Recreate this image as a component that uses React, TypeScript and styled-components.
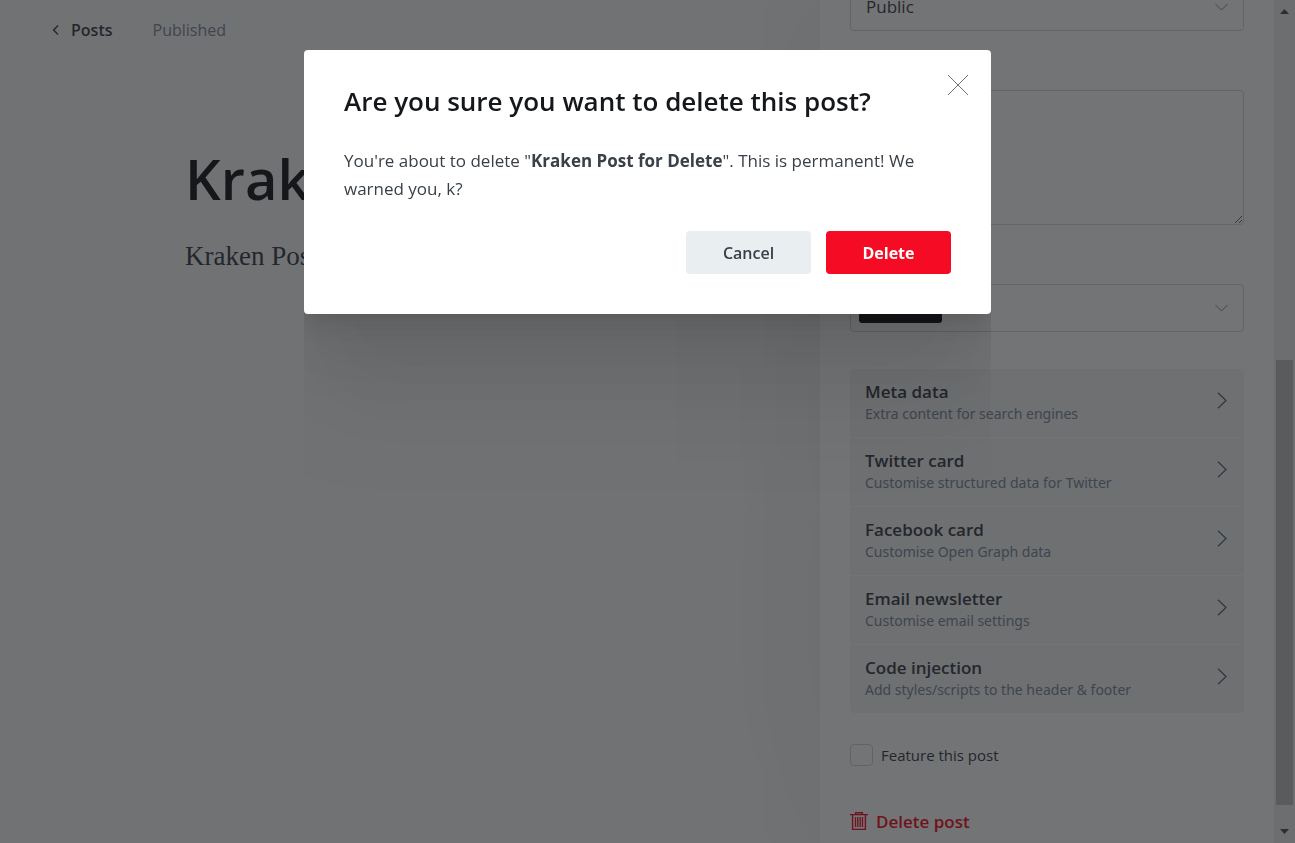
import React from "react";
import styled, { createGlobalStyle } from "styled-components";

const sans = `"Open Sans", "Noto Sans", sans-serif`;
const serif = `Georgia, "Liberation Serif", serif`;

const GlobalStyle = createGlobalStyle`
  *, *::before, *::after { box-sizing: border-box; }
  body {
    margin: 0;
    font-family: ${sans};
    font-size: 16px;
    line-height: 24px;
    color: #394047;
    background: #fff;
    overflow: hidden;
  }
  button, input, select, textarea { font: inherit; color: inherit; }
  h1, h2, p { margin: 0; }
`;

const Screen = styled.div`
  display: grid;
  grid-template-columns: minmax(0, 1fr) 475px;
  height: 100vh;
  overflow: hidden;
`;

const Editor = styled.main`
  min-width: 0;
  overflow: hidden;
  background: #fbfbfb;
`;

const EditorHeader = styled.header`
  display: flex;
  align-items: center;
  gap: 40px;
  height: 60px;
  padding: 0 52px;
`;

const BackLink = styled.a`
  display: flex;
  align-items: center;
  gap: 11px;
  color: #394047;
  font-weight: 600;
  text-decoration: none;
`;

const Status = styled.span`
  color: #7c8b9a;
`;

const Article = styled.article`
  padding: 78px 0 0 185px;
  white-space: nowrap;
`;

const PostTitle = styled.h1`
  font-size: 56px;
  line-height: 80px;
  font-weight: 600;
  color: #15171a;
`;

const PostBody = styled.p`
  margin-top: 22px;
  font-family: ${serif};
  font-size: 27px;
  line-height: 32px;
  color: #394047;
`;

const Sidebar = styled.aside`
  display: grid;
  grid-template-columns: minmax(0, 1fr) 21px;
  height: 100vh;
  background: #fff;
  box-shadow: 0 0 180px rgba(0, 0, 0, 0.08);
  z-index: 1;
`;

const Settings = styled.form`
  display: flex;
  flex-direction: column;
  justify-content: flex-end;
  height: 100vh;
  padding: 0 30px 8px;
  overflow: hidden;
`;

const SelectBox = styled.div`
  display: grid;
  flex: none;
  align-items: center;
  height: 48px;
  border: 1px solid #d5d9dd;
  border-radius: 4px;

  > * {
    grid-area: 1 / 1;
  }

  > svg {
    justify-self: end;
    margin-right: 15px;
    pointer-events: none;
  }
`;

const Select = styled.select`
  appearance: none;
  width: 100%;
  height: 46px;
  padding: 0 15px;
  border: 0;
  background: transparent;
  font-size: 17px;
`;

const Excerpt = styled.textarea`
  flex: none;
  height: 135px;
  margin: 59px 0;
  padding: 10px 15px;
  border: 1px solid #d5d9dd;
  border-radius: 4px;
  background: #fff;
  resize: vertical;
`;

const AuthorTag = styled.button`
  justify-self: start;
  width: 83px;
  height: 30px;
  margin-left: 8px;
  padding: 0;
  border: 0;
  border-radius: 3px;
  background: #15171a;
`;

const OptionList = styled.div`
  display: flex;
  flex: none;
  flex-direction: column;
  gap: 1px;
  margin: 37px 0 30px;
  border-radius: 4px;
  overflow: hidden;
`;

const Option = styled.button`
  display: flex;
  align-items: center;
  justify-content: space-between;
  height: 68px;
  padding: 0 17px 6px 15px;
  border: 0;
  background: #f3f4f5;
  text-align: left;
`;

const OptionText = styled.span`
  display: flex;
  flex-direction: column;
  padding-top: 4px;
`;

const OptionTitle = styled.span`
  line-height: 23px;
  font-size: 17px;
  font-weight: 600;
`;

const OptionHint = styled.span`
  font-family: "Noto Sans", sans-serif;
  font-size: 14px;
  line-height: 21px;
  color: #7c8b9a;
`;

const FeatureLabel = styled.label`
  display: flex;
  flex: none;
  align-items: center;
  gap: 8px;
  height: 24px;
  font-size: 15px;
`;

const FeatureBox = styled.input`
  appearance: none;
  width: 23px;
  height: 22px;
  margin: 0;
  border: 1px solid #ced4d9;
  border-radius: 4px;
`;

const DeleteLink = styled.button`
  display: flex;
  flex: none;
  align-items: center;
  align-self: flex-start;
  gap: 8px;
  height: 26px;
  margin-top: 42px;
  padding: 0;
  border: 0;
  background: none;
  color: #f50b23;
  font-size: 17px;
  font-weight: 600;
`;

const ScrollTrack = styled.div`
  display: flex;
  flex-direction: column;
  align-items: center;
  justify-content: space-between;
  height: 100vh;
  padding: 9px 0;
  background: #f1f1f1;
`;

const ScrollThumb = styled.div`
  flex: 0 0 54%;
  width: 17px;
  margin: auto 0 24px;
  background: #c1c1c1;
`;

const Overlay = styled.div`
  position: fixed;
  inset: 0;
  z-index: 10;
  display: flex;
  align-items: flex-start;
  justify-content: center;
  padding-top: 50px;
  background: rgba(21, 23, 26, 0.6);
`;

const Dialog = styled.section`
  position: relative;
  width: 100%;
  max-width: 687px;
  padding: 32px 40px 40px;
  border-radius: 4px;
  background: #fff;
  box-shadow:
    0 3px 6px rgba(0, 0, 0, 0.03),
    0 12px 20px rgba(0, 0, 0, 0.07),
    0 40px 60px rgba(0, 0, 0, 0.07),
    0 100px 100px rgba(0, 0, 0, 0.07);
  clip-path: inset(0 0 -300px 0);
`;

const DialogTitle = styled.h2`
  font-size: 26px;
  line-height: 38px;
  font-weight: 600;
  color: #15171a;
`;

const DialogText = styled.p`
  margin-top: 27px;
  font-size: 17px;
  line-height: 28px;
`;

const CloseButton = styled.button`
  position: absolute;
  top: 24px;
  right: 22px;
  display: flex;
  padding: 0;
  border: 0;
  background: none;
`;

const DialogActions = styled.div`
  display: flex;
  justify-content: flex-end;
  gap: 15px;
  margin-top: 28px;
`;

const ActionButton = styled.button<{ $danger?: boolean }>`
  width: 125px;
  height: 43px;
  padding: 0;
  border: 0;
  border-radius: 4px;
  background: ${(p) => (p.$danger ? "#f50b23" : "#e9eef1")};
  color: ${(p) => (p.$danger ? "#fff" : "#394047")};
  font-weight: ${(p) => (p.$danger ? 700 : 600)};
`;

const ChevronDown = () => (
  <svg width="13" height="8" viewBox="0 0 13 8" fill="none" stroke="#7c8b9a" aria-hidden="true">
    <path d="M.5 1l6 6 6-6" />
  </svg>
);

const ChevronRight = () => (
  <svg width="10" height="17" viewBox="0 0 10 17" fill="none" stroke="#5b6b7b" strokeWidth="1.3" aria-hidden="true">
    <path d="M1 .7l8 7.8-8 7.8" />
  </svg>
);

const ChevronLeft = () => (
  <svg width="8" height="10" viewBox="0 0 8 10" fill="none" stroke="#394047" strokeWidth="1.4" aria-hidden="true">
    <path d="M6 .6L1.6 5 6 9.4" />
  </svg>
);

const Trash = () => (
  <svg width="18" height="20" viewBox="0 0 18 20" fill="none" stroke="#f50b23" aria-hidden="true">
    <path strokeWidth="1.4" d="M0 2.6h18M5.6 2.4V.7h6.8v1.7M2.6 2.8v14.6h12.8V2.8" />
    <path strokeWidth="1.3" d="M5.5 5v10M7.8 5v10M10.2 5v10M12.5 5v10" />
  </svg>
);

const ScrollArrow = ({ down = false }: { down?: boolean }) => (
  <svg width="9" height="5" viewBox="0 0 9 5" fill="#505050" aria-hidden="true">
    <path d={down ? "M0 0h9L4.5 5z" : "M0 5h9L4.5 0z"} />
  </svg>
);

const options = [
  ["Meta data", "Extra content for search engines"],
  ["Twitter card", "Customise structured data for Twitter"],
  ["Facebook card", "Customise Open Graph data"],
  ["Email newsletter", "Customise email settings"],
  ["Code injection", "Add styles/scripts to the header & footer"],
];

export default function App() {
  return (
    <>
      <GlobalStyle />
      <Screen>
        <Editor>
          <EditorHeader>
            <BackLink href="#posts">
              <ChevronLeft />
              Posts
            </BackLink>
            <Status>Published</Status>
          </EditorHeader>
          <Article>
            <PostTitle>Kraken Post for Delete</PostTitle>
            <PostBody>Kraken Post for Delete</PostBody>
          </Article>
        </Editor>
        <Sidebar>
          <Settings>
            <SelectBox>
              <Select aria-label="Post access" defaultValue="public">
                <option value="public">Public</option>
              </Select>
              <ChevronDown />
            </SelectBox>
            <Excerpt aria-label="Excerpt" />
            <SelectBox>
              <AuthorTag type="button" aria-label="Author" />
              <ChevronDown />
            </SelectBox>
            <OptionList>
              {options.map(([title, hint]) => (
                <Option type="button" key={title}>
                  <OptionText>
                    <OptionTitle>{title}</OptionTitle>
                    <OptionHint>{hint}</OptionHint>
                  </OptionText>
                  <ChevronRight />
                </Option>
              ))}
            </OptionList>
            <FeatureLabel>
              <FeatureBox type="checkbox" />
              Feature this post
            </FeatureLabel>
            <DeleteLink type="button">
              <Trash />
              Delete post
            </DeleteLink>
          </Settings>
          <ScrollTrack>
            <ScrollArrow />
            <ScrollThumb />
            <ScrollArrow down />
          </ScrollTrack>
        </Sidebar>
      </Screen>
      <Overlay>
        <Dialog role="dialog" aria-modal="true" aria-labelledby="dialog-title">
          <DialogTitle id="dialog-title">Are you sure you want to delete this post?</DialogTitle>
          <CloseButton type="button" aria-label="Close">
            <svg width="22" height="22" viewBox="0 0 22 22" fill="none" stroke="#6f7174" aria-hidden="true">
              <path d="M1 1l20 20M21 1L1 21" />
            </svg>
          </CloseButton>
          <DialogText>
            You're about to delete "<strong>Kraken Post for Delete</strong>". This is permanent! We warned you, k?
          </DialogText>
          <DialogActions>
            <ActionButton type="button">Cancel</ActionButton>
            <ActionButton type="button" $danger>
              Delete
            </ActionButton>
          </DialogActions>
        </Dialog>
      </Overlay>
    </>
  );
}
